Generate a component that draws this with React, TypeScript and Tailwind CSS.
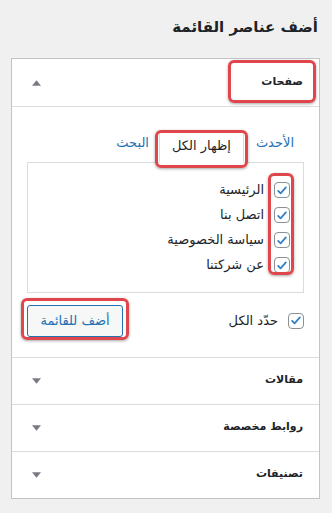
import React from "react";

const font = { fontFamily: '"DejaVu Sans", "Liberation Sans", sans-serif' };

function Check() {
  return (
    <span className="flex size-4 shrink-0 items-center justify-center rounded-[4px] border border-[#8c8f94] bg-white">
      <svg viewBox="0 0 20 20" className="size-[15px]">
        <path
          d="M4.5 10.5l3.5 3.5 7.5-8.5"
          fill="none"
          stroke="#3582c4"
          strokeWidth="2.6"
          strokeLinecap="round"
          strokeLinejoin="round"
        />
      </svg>
    </span>
  );
}

function Arrow({ up }: { up?: boolean }) {
  return (
    <svg viewBox="0 0 10 6" className="h-[6px] w-[9px]">
      <path d={up ? "M5 0L10 6H0Z" : "M0 0H10L5 6Z"} fill="#787c82" />
    </svg>
  );
}

function Mark({ className }: { className: string }) {
  return (
    <div
      className={`pointer-events-none absolute rounded-[6px] border-[3px] border-[#e0474c] shadow-[0_1px_3px_rgba(0,0,0,0.35)] ${className}`}
    />
  );
}

const pages = ["الرئيسية", "اتصل بنا", "سياسة الخصوصية", "عن شركتنا"];
const closed = ["مقالات", "روابط مخصصة", "تصنيفات"];

export default function App() {
  return (
    <div
      dir="rtl"
      style={font}
      className="relative h-[513px] w-[332px] bg-[#f0f0f1] pr-[12px] pl-[11px] pt-[18px] text-[#1d2327]"
    >
      <h2 className="mb-[22px] pr-[2px] text-[15px] font-bold leading-[18px]">أضف عناصر القائمة</h2>

      <div className="border border-[#c3c4c7] bg-white">
        <div className="flex h-[48px] items-center justify-between border-b border-[#dcdcde] pr-[16px] pl-[20px]">
          <span className="text-[11px] font-bold">صفحات</span>
          <Arrow up />
        </div>

        <div className="px-[15px] pt-[23px] pb-[20px]">
          <div className="flex items-end pr-[10px] text-[13px]">
            <span className="pb-[9px] text-[#2271b1]">الأحدث</span>
            <span className="mr-[12px] ml-[10px] -mb-px border border-b-white border-[#dcdcde] bg-white px-[12px] pt-[5px] pb-[6px]">
              إظهار الكل
            </span>
            <span className="pb-[9px] text-[#2271b1]">البحث</span>
          </div>
          <div className="h-[131px] border border-[#dcdcde] pr-[13px] pt-[19px]">
            <ul className="flex flex-col gap-[8px] text-[13px]">
              {pages.map((p) => (
                <li key={p} className="flex h-[17px] items-center gap-[10px]">
                  <Check />
                  <span>{p}</span>
                </li>
              ))}
            </ul>
          </div>
          <div className="mt-[12px] flex items-center justify-between">
            <label className="flex items-center gap-[10px] text-[13px]">
              <Check />
              <span>حدّد الكل</span>
            </label>
            <button className="h-[32px] w-[96px] rounded-[3px] border border-[#2271b1] bg-[#f6f7f7] text-[13px] text-[#2271b1]">
              أضف للقائمة
            </button>
          </div>
        </div>

        {closed.map((c) => (
          <div
            key={c}
            className="flex h-[47px] items-center justify-between border-t border-[#dcdcde] pr-[16px] pl-[20px]"
          >
            <span className="text-[11px] font-bold">{c}</span>
            <Arrow />
          </div>
        ))}
      </div>

      <Mark className="left-[228px] top-[60px] h-[43px] w-[88px]" />
      <Mark className="left-[155px] top-[130px] h-[38px] w-[93px]" />
      <Mark className="left-[268px] top-[173px] h-[102px] w-[26px]" />
      <Mark className="left-[21px] top-[298px] h-[42px] w-[108px]" />
    </div>
  );
}
